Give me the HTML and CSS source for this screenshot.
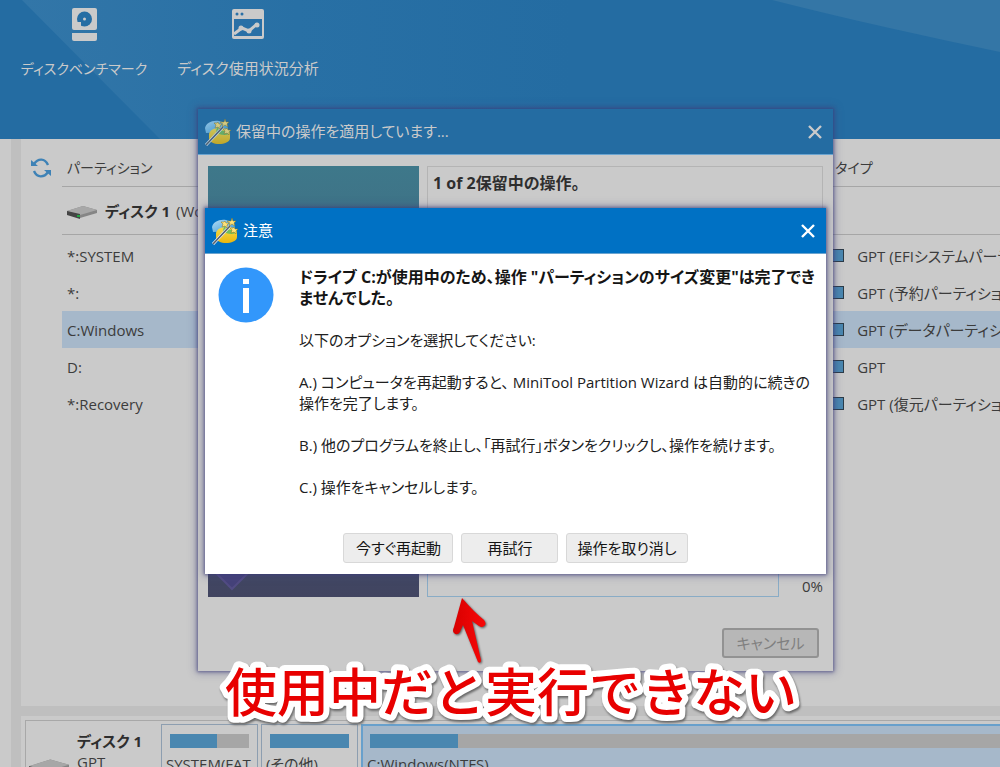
FILE: index.html
```html
<!DOCTYPE html>
<html lang="ja">
<head>
<meta charset="utf-8">
<title>MiniTool Partition Wizard</title>
<link rel="stylesheet" href="styles.css">
</head>
<body>
<svg class="defs" width="0" height="0" aria-hidden="true">
  <defs>
    <linearGradient id="gold" x1="0" y1="0" x2="0" y2="1"><stop offset="0" stop-color="#f6dc4c"/><stop offset="1" stop-color="#eab60c"/></linearGradient>
    <linearGradient id="glass" x1="0" y1="0" x2="1" y2="1"><stop offset="0" stop-color="#b4dcf4"/><stop offset="1" stop-color="#3598d6"/></linearGradient>
    <linearGradient id="red" x1="0" y1="0" x2="1" y2="0"><stop offset="0" stop-color="#d80000"/><stop offset="1" stop-color="#f80808"/></linearGradient>
    <symbol id="wizard" viewBox="0 0 28 28">
      <path d="M1 10C2 5 8 2 15 3c5 1 9 4 9 8v3L2 15z" fill="url(#glass)"/>
      <path d="M5 16c1-4 5-6 10-6s11 1 11 5v5c0 4-6 6-11 6S5 24 5 20z" fill="url(#gold)"/>
      <path d="M13 9c4 4 8 5 13 3l-1 4c-4 2-10 1-13-2z" fill="#76bd5b"/>
      <path d="M2 27 19 9" stroke="#e8edf2" stroke-width="3"/>
      <path d="M2 27 19 9" stroke="#56616b" stroke-width="1.600"/>
      <g fill="#ffe27a" stroke="#8c761a" stroke-width=".5"><path d="m21 1 1 3 3 0-2 2 1 3-3-2-3 2 1-3-3-2h4z"/><path d="m14 4 1 2 3 0-2 2 0 3-2-2-3 1 1-3-2-2h3z"/><path d="m23 10 1 2 3 0-2 2 0 3-2-2-3 1 1-3-2-2h3z"/></g>
    </symbol>
    <symbol id="close" viewBox="0 0 14 14"><path d="m1 1 12 12M13 1 1 13" stroke="currentColor" stroke-width="2.400" fill="none"/></symbol>
    <symbol id="drive" viewBox="0 0 30 14">
      <path d="M0 6 16 1l14 4v3l-17 5-13-4z" fill="#858585"/><path d="M0 6 16 1l14 4-17 5z" fill="#a7a7a7"/><path d="m0 6 13 3v5L0 10z" fill="#454545"/><path d="M10 10h3v2h-3z" fill="#24a343"/>
    </symbol>
  </defs>
</svg>
<div class="app">
  <header class="ribbon">
    <svg class="ribbon-bg" viewBox="0 0 1000 139" preserveAspectRatio="none" aria-hidden="true">
      <defs><linearGradient id="sheen" x1="0" x2="1"><stop offset="0" stop-color="#3276a8"/><stop offset=".5" stop-color="#2870a5"/><stop offset="1" stop-color="#246ca2"/></linearGradient></defs>
      <path d="M22 0h550v139H160z" fill="url(#sheen)"/>
      <path d="M772 0h228v52C925 36 850 20 772 0z" fill="#3476a6"/>
    </svg>
    <button class="tool" type="button">
      <svg width="36" height="36" viewBox="0 0 36 36"><rect x="6" y="3" width="25" height="22" rx="2" fill="#cacaca"/><path d="M6 28h25v6q0 2-2 2H8q-2 0-2-2z" fill="#cacaca"/><circle cx="18.500" cy="14" r="7.500" fill="#266ea4"/><circle cx="18.500" cy="14" r="1.500" fill="#cacaca"/><path d="M10 17h5v5h-5z" fill="#cacaca"/></svg>
      <span>ディスクベンチマーク</span>
    </button>
    <button class="tool" type="button">
      <svg width="36" height="36" viewBox="0 0 36 36"><path d="M4 4h28q2 0 2 2v26q0 2-2 2H4q-2 0-2-2V6q0-2 2-2z" fill="#cacaca"/><path d="M4 14h28v17H4z" fill="#2a70a6"/><circle cx="7" cy="9" r="1.500" fill="#2a70a6"/><circle cx="12" cy="9" r="1.500" fill="#2a70a6"/><path d="m4 29 8-6 7 3 8-7" fill="none" stroke="#cacaca" stroke-width="3"/><g fill="#cacaca"><circle cx="11" cy="23" r="2.500"/><circle cx="19" cy="26" r="2.500"/><circle cx="27" cy="20" r="2.500"/></g></svg>
      <span>ディスク使用状況分析</span>
    </button>
  </header>

  <div class="workspace">
    <aside class="rail"></aside>
    <main class="content">
      <section class="list">
        <button class="refresh" type="button" aria-label="更新"><svg width="20" height="20" viewBox="0 0 20 20"><g fill="none" stroke="#3e82b6" stroke-width="2.400"><path d="M3 6C7 0 14 0 17 7"/><path d="M17 14C13 20 6 20 3 13"/></g><path d="M0 2v6h7zM20 18v-6h-7z" fill="#3e82b6"/></svg></button>
        <table class="partitions">
          <thead><tr><th class="c-name">パーティション</th><th>タイプ</th></tr></thead>
          <tbody>
            <tr class="disk"><td><svg width="30" height="14"><use href="#drive"/></svg><b>ディスク 1</b> (Wo</td><td></td></tr>
            <tr class="first"><td>*:SYSTEM</td><td class="type"><i></i>GPT (EFIシステムパーティション)</td></tr>
            <tr><td>*:</td><td class="type"><i></i>GPT (予約パーティション)</td></tr>
            <tr class="selected"><td>C:Windows</td><td class="type"><i></i>GPT (データパーティション)</td></tr>
            <tr><td>D:</td><td class="type"><i></i>GPT</td></tr>
            <tr><td>*:Recovery</td><td class="type"><i></i>GPT (復元パーティション)</td></tr>
          </tbody>
        </table>
      </section>
      <section class="map">
        <div class="map-disk">
          <svg width="40" height="19" viewBox="0 0 30 14"><use href="#drive"/></svg>
          <div><b>ディスク 1</b><span>GPT</span></div>
        </div>
        <div class="part"><div class="usage"><div class="used" style="width:59%"></div></div><span>SYSTEM(FAT</span></div>
        <div class="part"><div class="usage"><div class="used" style="width:100%"></div></div><span>(その他)</span></div>
        <div class="part active"><div class="usage"><div class="used" style="width:14%"></div></div><span>C:Windows(NTFS)</span></div>
      </section>
    </main>
  </div>

  <section class="window progress" role="dialog" aria-labelledby="t1">
    <div class="titlebar"><svg width="28" height="28" opacity=".8"><use href="#wizard"/></svg><h2 id="t1">保留中の操作を適用しています...</h2><button type="button" class="close" aria-label="閉じる"><svg width="14" height="14"><use href="#close"/></svg></button></div>
    <div class="progress-body">
      <div class="art"><svg width="60" height="60" viewBox="0 0 60 60"><path d="m24 10 22 20-22 22L2 30z" fill="#45427a" stroke="#524c84" stroke-width="2"/></svg></div>
      <div class="status">
        <div class="ops">1 of 2保留中の操作。</div>
        <div class="bar-row"><div class="bar"></div><span>0%</span></div>
      </div>
    </div>
    <div class="progress-foot"><button type="button" class="btn off" disabled>キャンセル</button></div>
  </section>

  <section class="window alert" role="alertdialog" aria-labelledby="t2">
    <div class="titlebar"><svg width="28" height="28"><use href="#wizard"/></svg><h2 id="t2">注意</h2><button type="button" class="close" aria-label="閉じる"><svg width="14" height="14"><use href="#close"/></svg></button></div>
    <div class="alert-body">
      <svg class="info" width="56" height="56" viewBox="0 0 56 56"><circle cx="28" cy="28" r="27.500" fill="#3297fb"/><path d="M25 12h6v5h-6zM25 21h6v25h-6z" fill="#fff"/></svg>
      <div class="message">
        <p class="lead">ドライブ C:が使用中のため、操作 "パーティションのサイズ変更"は完了でき<br>ませんでした。</p>
        <p>以下のオプションを選択してください:</p>
        <p>A.) コンピュータを再起動すると、 MiniTool Partition Wizard は自動的に続きの<br>操作を完了します。</p>
        <p>B.) 他のプログラムを終止し、「再試行」ボタンをクリックし、操作を続けます。</p>
        <p>C.) 操作をキャンセルします。</p>
      </div>
    </div>
    <div class="actions"><button type="button" class="btn">今すぐ再起動</button><button type="button" class="btn">再試行</button><button type="button" class="btn">操作を取り消し</button></div>
  </section>

  <svg class="arrow" width="36" height="68" viewBox="0 0 36 68"><path d="M9 1Q21 15 31 23q3 4 0 6-2 2-5 0l-7-5 9 39q0 4-3 2L10 28l-3 7q-3 4-6 1-2-2 0-6z" fill="url(#red)"/></svg>
  <svg class="caption" width="600" height="80" viewBox="0 0 600 80"><text x="15" y="56">使用中だと実行できない</text></svg>
</div>
</body>
</html>
```
FILE: styles.css
```css
* { box-sizing: border-box; }
body {
  margin: 0;
  color: #3c3c3c;
  background: #cacaca;
  font: 15px/21px "Open Sans", "Noto Sans CJK JP", sans-serif;
  font-feature-settings: "palt";
}
button { font: inherit; font-feature-settings: inherit; color: inherit; }
h2, p { margin: 0; }
svg { flex: none; }
.defs { position: absolute; }
.app { position: relative; display: flex; flex-direction: column; height: 100vh; overflow: hidden; }

.ribbon { position: relative; display: flex; gap: 20px; height: 139px; padding: 5px 0 0 18px; background: #246ca2; flex: none; }
.ribbon-bg { position: absolute; inset: 0; width: 100%; height: 100%; }
.tool { position: relative; display: flex; flex-direction: column; align-items: center; gap: 17px; width: 132px; height: 80px; padding: 0; border: 0; background: none; color: #cacaca; white-space: nowrap; font-size: 14px; }
.tool + .tool { width: 156px; font-size: 15px; }

.workspace { flex: 1; display: flex; min-height: 0; }
.rail { width: 21px; flex: none; border-right: 10px solid #bfbfbf; }
.content { flex: 1; min-width: 0; display: flex; flex-direction: column; }
.list { flex: 1; min-height: 0; display: flex; align-items: flex-start; padding: 11px 0 0 10px; border-bottom: 10px solid #bfbfbf; }
.refresh { width: 31px; height: 36px; padding: 0; border: 0; background: none; text-align: left; flex: none; display: flex; align-items: center; }
.partitions { flex: 1; width: 100%; min-width: 0; table-layout: fixed; border-collapse: collapse; text-align: left; }
.partitions th { height: 36px; padding: 0 5px; border-bottom: 1px solid #a6a6a6; font-size: 14px; font-weight: 400; }
.c-name { width: 82%; }
.partitions th + th { padding-left: 4px; }
.partitions td { height: 37px; padding: 2px 5px 0; white-space: nowrap; overflow: hidden; }
.partitions .disk td { height: 48px; border-bottom: 1px solid #a6a6a6; }
.partitions .first td { height: 40px; padding-top: 4px; }
.partitions .disk svg { margin-right: 8px; vertical-align: middle; }
.partitions .disk b { color: #2e2e2e; margin-right: 2px; }
.partitions .type { padding-left: 0; }
.type i { display: inline-block; width: 13px; height: 13px; margin-right: 13px; border: 1px solid #2c3c48; background: #4a87b0; }
.selected { background: #a6b8ca; }

.map { flex: none; display: flex; gap: 3px; height: 47px; margin: 4px 0 0 4px; padding-top: 3px; border: 1px solid #a8a8a8; border-width: 1px 0 0 1px; overflow: hidden; }
.map-disk { display: flex; align-items: flex-start; width: 132px; gap: 8px; padding: 0 0 0 3px; }
.map-disk svg { margin-top: 34px; }
.map-disk div { display: flex; flex-direction: column; padding-top: 7px; }
.map-disk b { color: #2e2e2e; }
.part { width: 97px; height: 60px; padding: 9px 8px 0; border: 1px solid #8d9eb0; }
.part span { display: block; margin: 6px -4px 0; white-space: nowrap; overflow: hidden; }
.part.active { flex: 1; background: #a6b8ca; border: 2px solid #68a0cc; border-right: 0; padding: 8px 0 0 7px; }
.part.active span { margin: 6px 0 0 -3px; }
.usage { height: 14px; background: #a6a6a6; }
.used { height: 100%; background: #4a87b0; }

.window { position: absolute; display: flex; flex-direction: column; background: #cacaca; box-shadow: 0 0 3px 1px #3b3b7899, 0 0 8px 2px #46468066; }
.titlebar { display: flex; align-items: center; gap: 4px; height: 46px; padding: 0 11px 0 6px; background: #246ca2; color: #cacaca; border-bottom: 1px solid #6aa4d0; flex: none; }
.titlebar h2 { flex: 1; font-size: 15px; font-weight: 400; }
.close { display: flex; padding: 0; border: 0; background: none; }
.progress { left: 198px; right: 167px; top: 109px; height: 562px; }
.progress-body { flex: 1; display: flex; gap: 8px; padding: 11px 10px 0; }
.art { width: 211px; display: flex; align-items: flex-end; background: linear-gradient(#3e788a, #41607c 50%, #414460); }
.status { flex: 1; display: flex; flex-direction: column; gap: 8px; }
.ops { flex: 1; border: 1px solid #b4b4b4; padding: 6px 5px; color: #2e2e2e; font-size: 16px; font-weight: 700; }
.bar-row { display: flex; justify-content: space-between; align-items: center; height: 32px; }
.bar { width: 352px; height: 32px; border: 1px solid #89acc6; }
.bar-row span { padding-top: 10px; }
.progress-foot { display: flex; justify-content: flex-end; padding: 31px 14px 13px; }
.btn { min-width: 97px; height: 30px; padding: 0 10px; border: 1px solid #d8d8d8; border-radius: 3px; background: #ededed; color: #151515; white-space: nowrap; }
.btn.off { border: 2px solid #929292; background: #b7b7b7; color: #808080; }

.alert { left: 205px; right: 174px; top: 208px; height: 366px; background: #fff; color: #202020; }
.alert .titlebar { background: #0071c4; color: #fff; }
.alert-body { flex: 1; display: flex; gap: 25px; padding: 13px 0 0 13px; }
.message { white-space: nowrap; }
.message p + p { margin-top: 21px; }
.lead { font-size: 16px; font-weight: 700; color: #151515; }
.actions { display: flex; justify-content: center; gap: 8px; padding: 0 0 11px; }
.actions .btn:first-child { min-width: 110px; }
.actions .btn:last-child { min-width: 120px; }

.arrow { position: absolute; left: 453px; top: 597px; filter: drop-shadow(1px 1px 1px #555); }
.caption { position: absolute; left: 210px; top: 656px; overflow: visible; filter: drop-shadow(1px 2px 1px #666); }
.caption text {
  fill: #e80000; stroke: #fff; stroke-width: 12px; stroke-linejoin: round; paint-order: stroke;
  font: 500 52px "Noto Sans CJK JP", sans-serif; font-feature-settings: normal;
}
```
